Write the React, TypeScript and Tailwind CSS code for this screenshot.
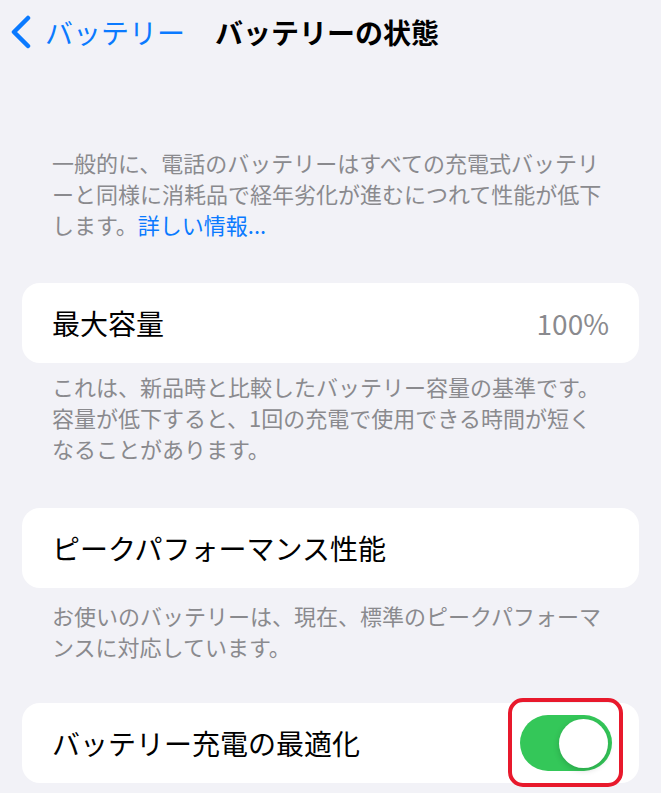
import React, { useState } from "react";

const jp = { fontFamily: '"Noto Sans CJK JP", "Noto Sans", sans-serif' };

function Card({ children }: { children: React.ReactNode }) {
  return (
    <div className="relative mx-[22px] h-[80px] rounded-[18px] bg-white pl-[30px] pr-[30px] flex items-center justify-between">
      {children}
    </div>
  );
}

function Caption({ children }: { children: React.ReactNode }) {
  return (
    <p className="px-[52px] text-[22px] leading-[31px] text-[#8a8a8e]">{children}</p>
  );
}

export default function App() {
  const [optimized, setOptimized] = useState(true);

  return (
    <div className="w-[661px] h-[793px] overflow-hidden bg-[#f2f2f7]" style={jp}>
      {/* nav bar */}
      <div className="flex items-center h-[64px] pl-[10px]">
        <svg width="22" height="34" viewBox="0 0 22 34" className="shrink-0">
          <path
            d="M18 3 L4 17 L18 31"
            fill="none"
            stroke="#0a7aff"
            strokeWidth="4.5"
            strokeLinecap="round"
            strokeLinejoin="round"
          />
        </svg>
        <span className="ml-[13px] text-[28px] leading-[34px] text-[#0a7aff]">バッテリー</span>
        <span className="ml-[30px] text-[28px] leading-[34px] font-bold text-black">バッテリーの状態</span>
      </div>

      <div className="pt-[83px]">
        <Caption>
          一般的に、電話のバッテリーはすべての充電式バッテリーと同様に消耗品で経年劣化が進むにつれて性能が低下します。
          <span className="text-[#0a7aff]">詳しい情報...</span>
        </Caption>
      </div>

      <div className="mt-[43px]">
        <Card>
          <span className="text-[28px] text-black">最大容量</span>
          <span className="text-[28px] text-[#8a8a8e]">100%</span>
        </Card>
      </div>

      <div className="mt-[8px]">
        <Caption>
          これは、新品時と比較したバッテリー容量の基準です。容量が低下すると、1回の充電で使用できる時間が短くなることがあります。
        </Caption>
      </div>

      <div className="mt-[44px]">
        <Card>
          <span className="text-[28px] text-black">ピークパフォーマンス性能</span>
        </Card>
      </div>

      <div className="mt-[12px]">
        <Caption>
          お使いのバッテリーは、現在、標準のピークパフォーマンスに対応しています。
        </Caption>
      </div>

      <div className="mt-[41px]">
        <Card>
          <span className="text-[28px] text-black">バッテリー充電の最適化</span>
          <button
            onClick={() => setOptimized(!optimized)}
            className={`relative w-[92px] h-[56px] rounded-full mr-[-3px] ${
              optimized ? "bg-[#34c759]" : "bg-[#e9e9eb]"
            }`}
          >
            <span
              className={`absolute top-[4px] w-[49px] h-[49px] rounded-full bg-white shadow-[0_2px_6px_rgba(0,0,0,0.18)] ${
                optimized ? "right-[4px]" : "left-[4px]"
              }`}
            />
          </button>
          {/* highlight box */}
          <div className="absolute left-[486px] top-[-5px] w-[115px] h-[89px] rounded-[15px] border-[4px] border-[#e8192c] pointer-events-none" />
        </Card>
      </div>
    </div>
  );
}
